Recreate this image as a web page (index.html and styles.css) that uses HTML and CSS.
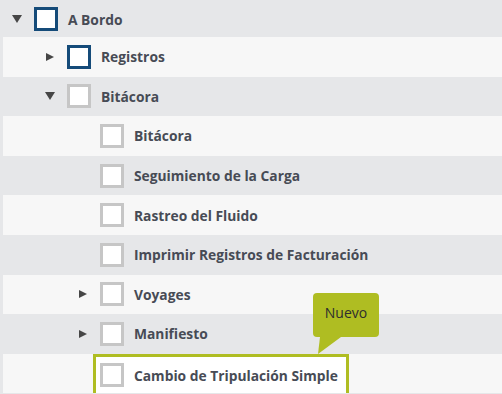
FILE: index.html
```html
<!DOCTYPE html>
<html lang="es">
<head>
    <meta charset="UTF-8">
    <meta name="viewport" content="width=device-width, initial-scale=1.0">
    <title>Árbol de permisos</title>
    <link rel="stylesheet" href="styles.css">
</head>
<body>
    <div class="tree">
        <div class="row first lvl-0">
            <span class="toggle"><svg viewBox="0 0 10 10"><polygon points="0,1 10,1 5,9"/></svg></span>
            <span class="check dark"></span>
            <span class="label">A Bordo</span>
        </div>
        <div class="row alt lvl-1">
            <span class="toggle"><svg viewBox="0 0 10 10"><polygon points="1,1 9,5 1,9"/></svg></span>
            <span class="check dark"></span>
            <span class="label">Registros</span>
        </div>
        <div class="row lvl-1">
            <span class="toggle"><svg viewBox="0 0 10 10"><polygon points="0,1 10,1 5,9"/></svg></span>
            <span class="check"></span>
            <span class="label">Bitácora</span>
        </div>
        <div class="row alt lvl-2">
            <span class="toggle"></span>
            <span class="check"></span>
            <span class="label">Bitácora</span>
        </div>
        <div class="row lvl-2">
            <span class="toggle"></span>
            <span class="check"></span>
            <span class="label">Seguimiento de la Carga</span>
        </div>
        <div class="row alt lvl-2">
            <span class="toggle"></span>
            <span class="check"></span>
            <span class="label">Rastreo del Fluido</span>
        </div>
        <div class="row lvl-2">
            <span class="toggle"></span>
            <span class="check"></span>
            <span class="label">Imprimir Registros de Facturación</span>
        </div>
        <div class="row alt lvl-2">
            <span class="toggle"><svg viewBox="0 0 10 10"><polygon points="1,1 9,5 1,9"/></svg></span>
            <span class="check"></span>
            <span class="label">Voyages</span>
        </div>
        <div class="row lvl-2">
            <span class="toggle"><svg viewBox="0 0 10 10"><polygon points="1,1 9,5 1,9"/></svg></span>
            <span class="check"></span>
            <span class="label">Manifiesto</span>
        </div>
        <div class="row alt lvl-2">
            <span class="toggle"></span>
            <div class="item new">
                <span class="check"></span>
                <span class="label">Cambio de Tripulación Simple</span>
                <div class="badge">
                    Nuevo
                    <svg class="pointer" viewBox="0 0 24 17"><polygon points="2,0 23,0 0,17"/></svg>
                </div>
            </div>
        </div>
    </div>
</body>
</html>
```

FILE: styles.css
```css
body {
    margin: 0;
    font-family: "Open Sans", "Liberation Sans", sans-serif;
    background: #e6e7e9;
}

.tree {
    height: 394px;
    overflow: hidden;
    background: #e6e7e9;
}

.row {
    display: flex;
    align-items: center;
    height: 39.6px;
    box-sizing: border-box;
}

.row.first {
    height: 37px;
    padding-top: 1px;
}

.row.alt {
    background: #f7f7f7;
    margin-left: 3px;
}

.lvl-0 { padding-left: 12px; }
.lvl-1 { padding-left: 45px; }
.lvl-2 { padding-left: 78px; }
.row.alt.lvl-1 { padding-left: 42px; }
.row.alt.lvl-2 { padding-left: 75px; }

.toggle {
    width: 22px;
    height: 10px;
    flex: none;
    display: flex;
}

.toggle svg {
    width: 10px;
    height: 10px;
    fill: #464646;
}

.check {
    width: 24px;
    height: 24px;
    flex: none;
    box-sizing: border-box;
    border: 3px solid #c6c6c6;
    background: #fff;
    margin-right: 10px;
}

.check.dark {
    border-color: #154b79;
}

.label {
    font-size: 13.8px;
    font-weight: 700;
    color: #474b55;
    white-space: nowrap;
}

.item {
    display: flex;
    align-items: center;
}

.item.new {
    position: relative;
    align-self: stretch;
    margin-left: -7px;
    padding: 0 8px 0 4px;
    border: 3px solid #afbd22;
    border-bottom: none;
    background: #fff;
}

.badge {
    position: absolute;
    left: 217px;
    top: -64px;
    width: 66px;
    height: 44px;
    box-sizing: border-box;
    padding-top: 10px;
    text-align: center;
    background: #afbd22;
    border-radius: 4px;
    color: #2e2e2e;
    font-size: 14px;
}

.badge .pointer {
    position: absolute;
    left: 5px;
    top: 44px;
    width: 24px;
    height: 17px;
    fill: #afbd22;
}
```
